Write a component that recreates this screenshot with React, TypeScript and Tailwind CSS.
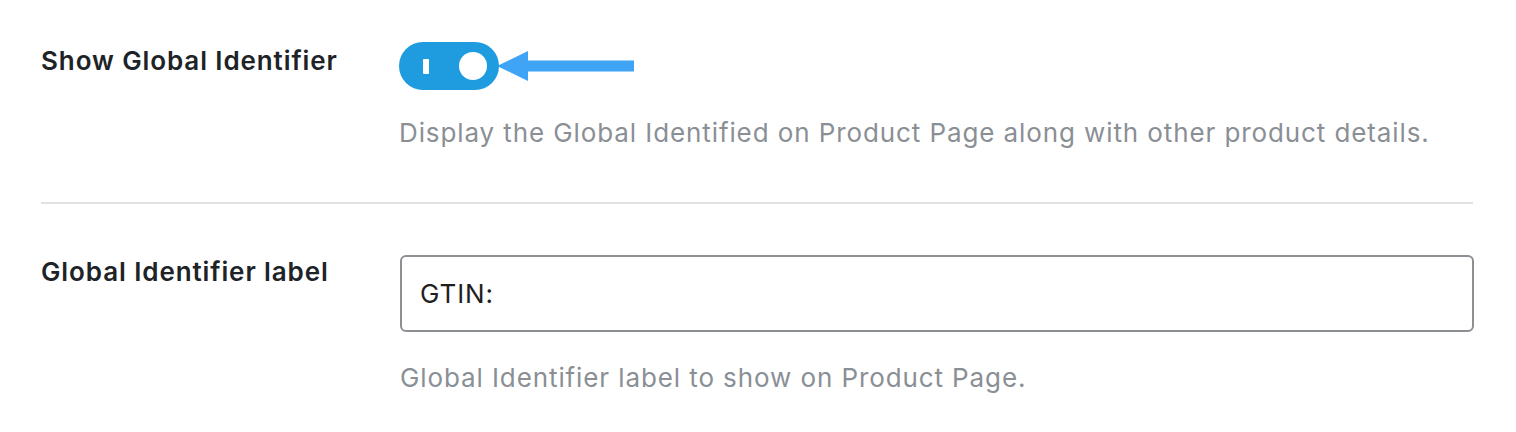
import { useState } from 'react'

const FONT = { fontFamily: 'Inter, "Noto Sans", sans-serif' }

function Toggle({ on, onChange }: { on: boolean; onChange: (v: boolean) => void }) {
  return (
    <button
      type="button"
      role="switch"
      aria-checked={on}
      onClick={() => onChange(!on)}
      className="relative flex h-[48px] w-[100px] shrink-0 items-center rounded-full bg-[#1f9be0]"
    >
      <span className="absolute left-[24px] top-[17px] h-[15px] w-[6px] rounded-[1px] bg-white" />
      <span className="absolute left-[60px] top-[10px] h-[28px] w-[28px] rounded-full bg-white" />
    </button>
  )
}

function Arrow() {
  return (
    <svg width="140" height="34" viewBox="0 0 140 34" className="-ml-[2px]">
      <polygon points="0,17 31,2 31,32" fill="#3fa4f5" />
      <rect x="30" y="11.5" width="107" height="11" fill="#3fa4f5" />
    </svg>
  )
}

export default function App() {
  const [show, setShow] = useState(true)
  const [label, setLabel] = useState('GTIN:')
  return (
    <div className="min-h-[432px] w-[1516px] bg-white pl-[41px] pr-[41px]" style={FONT}>
      <div className="flex pt-[42px] pb-[52px]">
        <div className="w-[358px] shrink-0 pt-[2px] text-[26px] font-semibold leading-[34px] tracking-[0.9px] text-[#1d2327]">
          Show Global Identifier
        </div>
        <div className="flex flex-col">
          <div className="flex items-center">
            <Toggle on={show} onChange={setShow} />
            <Arrow />
          </div>
          <p className="mt-[26px] text-[26px] leading-[34px] tracking-[0.9px] text-[#8a8f95]">
            Display the Global Identified on Product Page along with other product details.
          </p>
        </div>
      </div>
      <div className="h-[2px] w-[1432px] bg-[#e2e2e4]" />
      <div className="flex pt-[51px]">
        <div className="w-[359px] shrink-0 text-[26px] font-semibold leading-[34px] tracking-[0.9px] text-[#1d2327]">
          Global Identifier label
        </div>
        <div className="flex flex-1 flex-col">
          <input
            value={label}
            onChange={(e) => setLabel(e.target.value)}
            className="h-[77px] w-[1074px] rounded-[6px] border-2 border-[#8c8f94] bg-white px-[18px] text-[26px] tracking-[0.9px] text-[#1e1e1e] outline-none"
          />
          <p className="mt-[29px] text-[26px] leading-[34px] tracking-[0.9px] text-[#8a8f95]">
            Global Identifier label to show on Product Page.
          </p>
        </div>
      </div>
    </div>
  )
}
